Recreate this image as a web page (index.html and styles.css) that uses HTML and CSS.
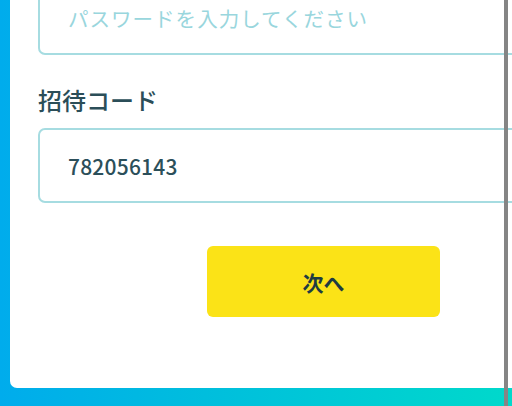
FILE: index.html
```html
<!DOCTYPE html>
<html lang="ja">
<head>
<meta charset="utf-8">
<link rel="stylesheet" href="styles.css">
</head>
<body>
<div class="page">
  <div class="card">
    <div class="form">
      <div class="field field-first">
        <div class="input placeholder">パスワードを入力してください</div>
      </div>
      <div class="field">
        <div class="label">招待コード</div>
        <div class="input value">782056143</div>
      </div>
      <div class="actions">
        <button class="next">次へ</button>
      </div>
    </div>
  </div>
</div>
<div class="scrollline"></div>
</body>
</html>
```
FILE: styles.css
```css
html, body {
  margin: 0;
  padding: 0;
  width: 512px;
  height: 406px;
  overflow: hidden;
}
body {
  background: linear-gradient(90deg, #00acec 0%, #00bedd 40%, #00d9cb 100%);
  font-family: "Noto Sans CJK JP", "Noto Sans", sans-serif;
  position: relative;
}
.page {
  padding-left: 10px;
  height: 406px;
  box-sizing: border-box;
}
.card {
  width: 502px;
  height: 388px;
  background: #ffffff;
  border-radius: 0 0 0 7px;
  overflow: hidden;
}
.form {
  padding-left: 28px;
  width: 599px;
}
.field-first {
  margin-top: -20px;
}
.input {
  height: 75px;
  box-sizing: border-box;
  border: 2px solid #a6dce1;
  border-radius: 7px;
  padding-left: 28px;
  display: flex;
  align-items: center;
  font-size: 20px;
  letter-spacing: 0.05em;
}
.placeholder {
  color: #99d6dd;
  font-size: 20.5px;
}
.value {
  color: #2b4f5a;
  font-size: 21px;
  font-weight: 500;
  letter-spacing: 0.01em;
}
.label {
  margin-top: 28px;
  margin-bottom: 11px;
  line-height: 34px;
  font-size: 24px;
  font-weight: 500;
  color: #2b4e58;
}
.actions {
  margin-top: 43px;
  padding-left: 169px;
}
.next {
  width: 233px;
  height: 71px;
  border: none;
  border-radius: 6px;
  background: #fbe317;
  color: #1e3b42;
  font-family: "Noto Sans CJK JP", sans-serif;
  font-weight: 700;
  font-size: 21px;
  cursor: pointer;
}
.scrollline {
  position: absolute;
  left: 504px;
  top: 0;
  width: 4px;
  height: 406px;
  background: #858585;
}
```
